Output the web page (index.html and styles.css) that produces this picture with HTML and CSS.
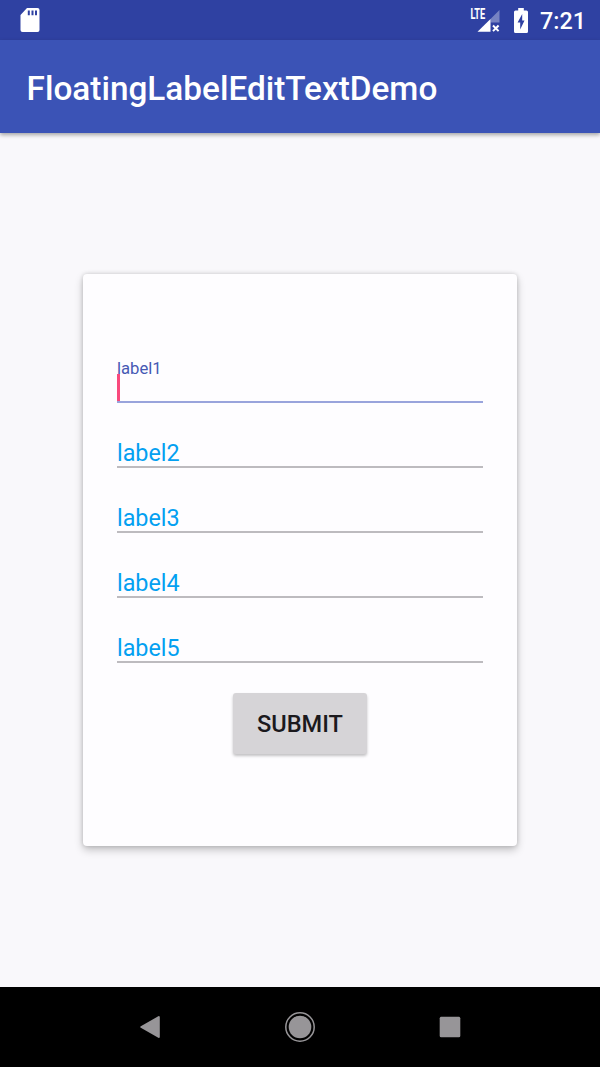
FILE: index.html
```html
<!DOCTYPE html>
<html lang="en">
<head>
<meta charset="utf-8">
<title>FloatingLabelEditTextDemo</title>
<link rel="stylesheet" href="styles.css">
</head>
<body>
<div class="screen">
  <div class="status-bar">
    <svg class="sd-icon" width="20" height="24" viewBox="0 0 20 24">
      <path fill="#fff" fill-rule="evenodd" d="M7 0H17.500Q19.500 0 19.500 2V22Q19.500 24 17.500 24H2.500Q.5 24 .5 22V7ZM7.800 2.500V7.200H9.800V2.500ZM11.500 2.500V7.200H13.500V2.500ZM15 2.500V7.200H17V2.500Z"/>
    </svg>
    <div class="status-right">
      <svg class="signal-icon" width="32" height="26" viewBox="0 0 32 26">
        <path fill="#fff" fill-opacity=".35" d="M29.500 3V15.500H20.500V12Z"/>
        <path fill="#fff" d="M20.500 12V24.800H7.500Z"/>
        <path fill="none" stroke="#fff" stroke-width="2" d="M23 18.500l5.600 5.600M28.600 18.500l-5.600 5.600"/>
        <g transform="translate(.4 12) scale(.66 1)"><text class="lte">LTE</text></g>
      </svg>
      <svg class="battery-icon" width="14" height="25" viewBox="0 0 14 25">
        <path fill="#fff" fill-rule="evenodd" d="M4.200 0H9.800V2.500H12.500Q14 2.500 14 4V23.500Q14 25 12.500 25H1.500Q0 25 0 23.500V4Q0 2.500 1.500 2.500H4.200ZM8.200 6L3.600 14.500H6.200V21.500L10.500 12.500H8.200Z"/>
      </svg>
      <span class="clock">7:21</span>
    </div>
  </div>
  <header class="app-bar"><h1 class="title">FloatingLabelEditTextDemo</h1></header>
  <main class="content">
    <form class="card">
      <div class="field field-active"><span class="floating-label">label1</span><span class="caret"></span></div>
      <div class="field">label2</div>
      <div class="field">label3</div>
      <div class="field">label4</div>
      <div class="field">label5</div>
      <button class="submit" type="button">SUBMIT</button>
    </form>
  </main>
  <nav class="nav-bar">
    <svg width="32" height="32" viewBox="0 0 32 32"><path fill="#979598" stroke="#979598" stroke-width="2" stroke-linejoin="round" d="M24.800 6V26L7.300 16Z"/></svg>
    <svg width="32" height="32" viewBox="0 0 32 32"><circle cx="16" cy="16" r="11.300" fill="#979598"/><circle cx="16" cy="16" r="14.200" fill="none" stroke="#979598" stroke-width="1.500"/></svg>
    <svg width="32" height="32" viewBox="0 0 32 32"><rect x="5.700" y="5.700" width="20.600" height="20.600" rx="1.500" fill="#979598"/></svg>
  </nav>
</div>
</body>
</html>
```
FILE: styles.css
```css
* { box-sizing: border-box; }
body { margin: 0; font-family: Roboto, "Liberation Sans", sans-serif; }
.screen { display: flex; flex-direction: column; width: 600px; height: 1067px; overflow: hidden; background: #f9f8fb; }
.status-bar { display: flex; justify-content: space-between; align-items: center; height: 40px; padding: 0 14px 0 20px; background: #2f41a2; }
.status-right { display: flex; align-items: center; }
.signal-icon { margin-right: 12px; }
.battery-icon { margin-right: 12.500px; }
.lte { font: 700 14px Roboto, sans-serif; fill: #fff; }
.clock { font-size: 23.33px; font-weight: 500; line-height: 40px; color: #fff; padding-top: 2px; }
.app-bar { display: flex; align-items: center; height: 93px; padding: 4px 26.600px 0; background: #3b53b6; box-shadow: 0 2px 4px rgba(0,0,0,.34); }
.title { margin: 0; font-size: 33.33px; font-weight: 500; line-height: 40px; color: #fff; }
.content { flex: 1; padding: 141px 83px; }
.card { display: flex; flex-direction: column; height: 572px; padding: 84px 34px; background: #fefdff; border-radius: 4px; box-shadow: 0 4px 9px rgba(0,0,0,.22), 0 0 4px rgba(0,0,0,.16); }
.field { display: flex; flex-direction: column; justify-content: flex-end; height: 65px; flex: none; border-bottom: 2px solid #bdbbbf; font-size: 23.33px; line-height: 26px; color: #03a0f1; }
.field-active { height: 45px; justify-content: flex-start; border-bottom: 2px solid #99a4dc; }
.floating-label { font-size: 16.67px; line-height: 22px; height: 16px; color: #4659b4; }
.caret { width: 3px; height: 28px; background: #f9497d; }
.submit { align-self: center; width: 134px; height: 61px; margin-top: 30px; padding: 0; border: 0; border-radius: 3px; background: #d6d4d7; box-shadow: 0 2px 3px rgba(0,0,0,.24); font: 500 23.6px/63px Roboto, sans-serif; color: #1b191d; }
.nav-bar { display: flex; justify-content: center; align-items: center; gap: 118px; height: 80px; background: #000; }
```
